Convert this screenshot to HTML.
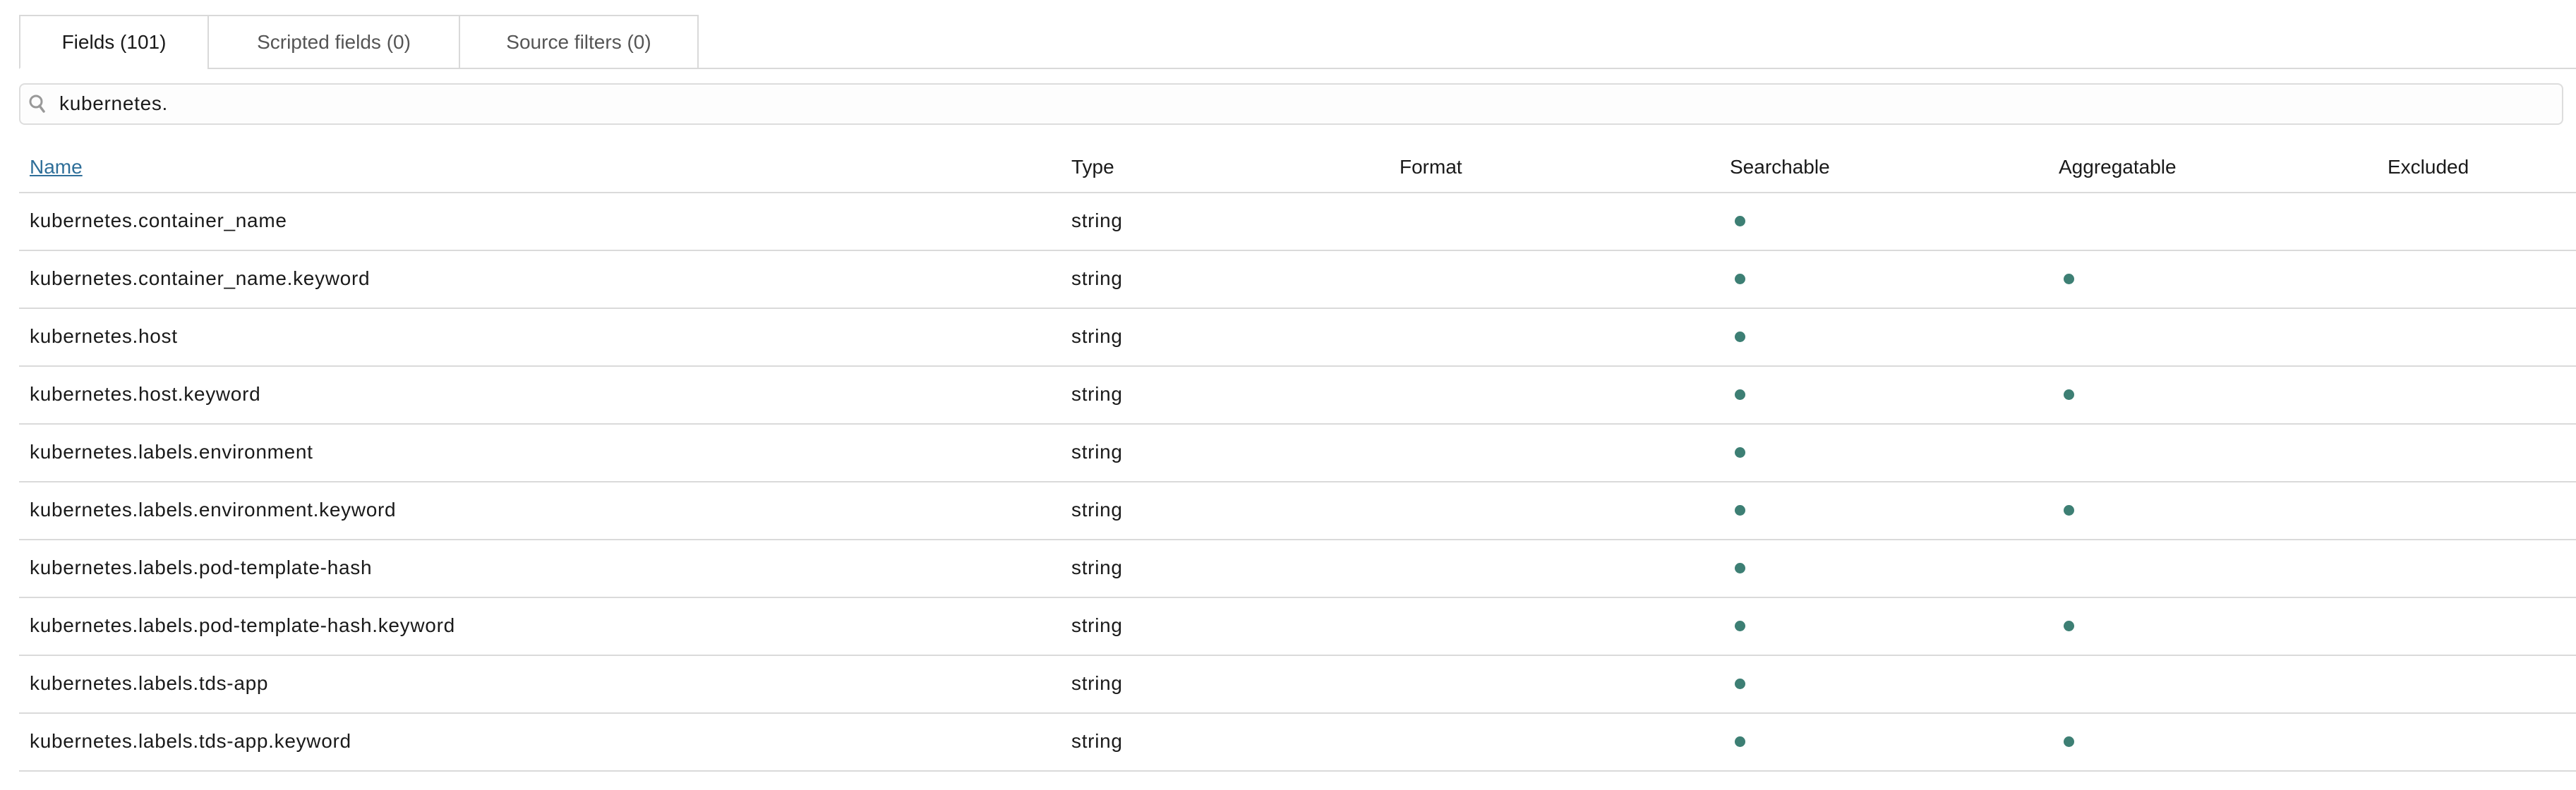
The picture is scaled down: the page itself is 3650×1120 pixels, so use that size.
<!DOCTYPE html>
<html><head><meta charset="utf-8"><style>
*{margin:0;padding:0;box-sizing:border-box}
body{width:3650px;height:1120px;background:#fff;position:relative;overflow:hidden;font-family:"Liberation Sans",sans-serif;color:#1a1a1a}
.a{position:absolute}
.tabline{left:27px;top:96px;width:3623px;height:2px;background:#d9d9d9}
.tab{top:21px;height:77px;border:2px solid #d9d9d9;font-size:28px;color:#555;display:flex;align-items:center;justify-content:center;background:#fff}
.search{left:27px;top:118px;width:3605px;height:59px;border:2px solid #ddd;border-radius:8px;background:#fdfdfd}
.hl{left:27px;width:3623px;height:2px;background:#dadada}
.t{font-size:28px;line-height:32px}
.r{letter-spacing:0.7px}
.dot{width:15px;height:15px;border-radius:50%;background:#3d7f74}
</style></head><body>
<div class="a tabline"></div>
<div class="a tab" style="left:27px;width:269px;color:#1a1a1a;border-bottom-color:#fff">Fields (101)</div>
<div class="a tab" style="left:294px;width:358px;">Scripted fields (0)</div>
<div class="a tab" style="left:650px;width:340px;">Source filters (0)</div>
<div class="a search"></div>
<svg class="a" style="left:40px;top:132px" width="26" height="30" viewBox="0 0 26 30"><circle cx="11" cy="12" r="8" fill="none" stroke="#999" stroke-width="3"/><path d="M16 18 L22 26" stroke="#999" stroke-width="3.5" stroke-linecap="round"/></svg>
<div class="a t r" style="left:84px;top:131px">kubernetes.</div>
<div class="a t" style="left:42px;top:221px;color:#2f6f99;text-decoration:underline">Name</div>
<div class="a t" style="left:1518px;top:221px">Type</div>
<div class="a t" style="left:1983px;top:221px">Format</div>
<div class="a t" style="left:2451px;top:221px">Searchable</div>
<div class="a t" style="left:2917px;top:221px">Aggregatable</div>
<div class="a t" style="left:3383px;top:221px">Excluded</div>
<div class="a hl" style="top:272px"></div>
<div class="a t r" style="left:42px;top:297px">kubernetes.container_name</div><div class="a t r" style="left:1518px;top:297px">string</div><div class="a dot" style="left:2458px;top:306px"></div><div class="a hl" style="top:354px"></div>
<div class="a t r" style="left:42px;top:379px">kubernetes.container_name.keyword</div><div class="a t r" style="left:1518px;top:379px">string</div><div class="a dot" style="left:2458px;top:388px"></div><div class="a dot" style="left:2924px;top:388px"></div><div class="a hl" style="top:436px"></div>
<div class="a t r" style="left:42px;top:461px">kubernetes.host</div><div class="a t r" style="left:1518px;top:461px">string</div><div class="a dot" style="left:2458px;top:470px"></div><div class="a hl" style="top:518px"></div>
<div class="a t r" style="left:42px;top:543px">kubernetes.host.keyword</div><div class="a t r" style="left:1518px;top:543px">string</div><div class="a dot" style="left:2458px;top:552px"></div><div class="a dot" style="left:2924px;top:552px"></div><div class="a hl" style="top:600px"></div>
<div class="a t r" style="left:42px;top:625px">kubernetes.labels.environment</div><div class="a t r" style="left:1518px;top:625px">string</div><div class="a dot" style="left:2458px;top:634px"></div><div class="a hl" style="top:682px"></div>
<div class="a t r" style="left:42px;top:707px">kubernetes.labels.environment.keyword</div><div class="a t r" style="left:1518px;top:707px">string</div><div class="a dot" style="left:2458px;top:716px"></div><div class="a dot" style="left:2924px;top:716px"></div><div class="a hl" style="top:764px"></div>
<div class="a t r" style="left:42px;top:789px">kubernetes.labels.pod-template-hash</div><div class="a t r" style="left:1518px;top:789px">string</div><div class="a dot" style="left:2458px;top:798px"></div><div class="a hl" style="top:846px"></div>
<div class="a t r" style="left:42px;top:871px">kubernetes.labels.pod-template-hash.keyword</div><div class="a t r" style="left:1518px;top:871px">string</div><div class="a dot" style="left:2458px;top:880px"></div><div class="a dot" style="left:2924px;top:880px"></div><div class="a hl" style="top:928px"></div>
<div class="a t r" style="left:42px;top:953px">kubernetes.labels.tds-app</div><div class="a t r" style="left:1518px;top:953px">string</div><div class="a dot" style="left:2458px;top:962px"></div><div class="a hl" style="top:1010px"></div>
<div class="a t r" style="left:42px;top:1035px">kubernetes.labels.tds-app.keyword</div><div class="a t r" style="left:1518px;top:1035px">string</div><div class="a dot" style="left:2458px;top:1044px"></div><div class="a dot" style="left:2924px;top:1044px"></div><div class="a hl" style="top:1092px"></div>
</body></html>
